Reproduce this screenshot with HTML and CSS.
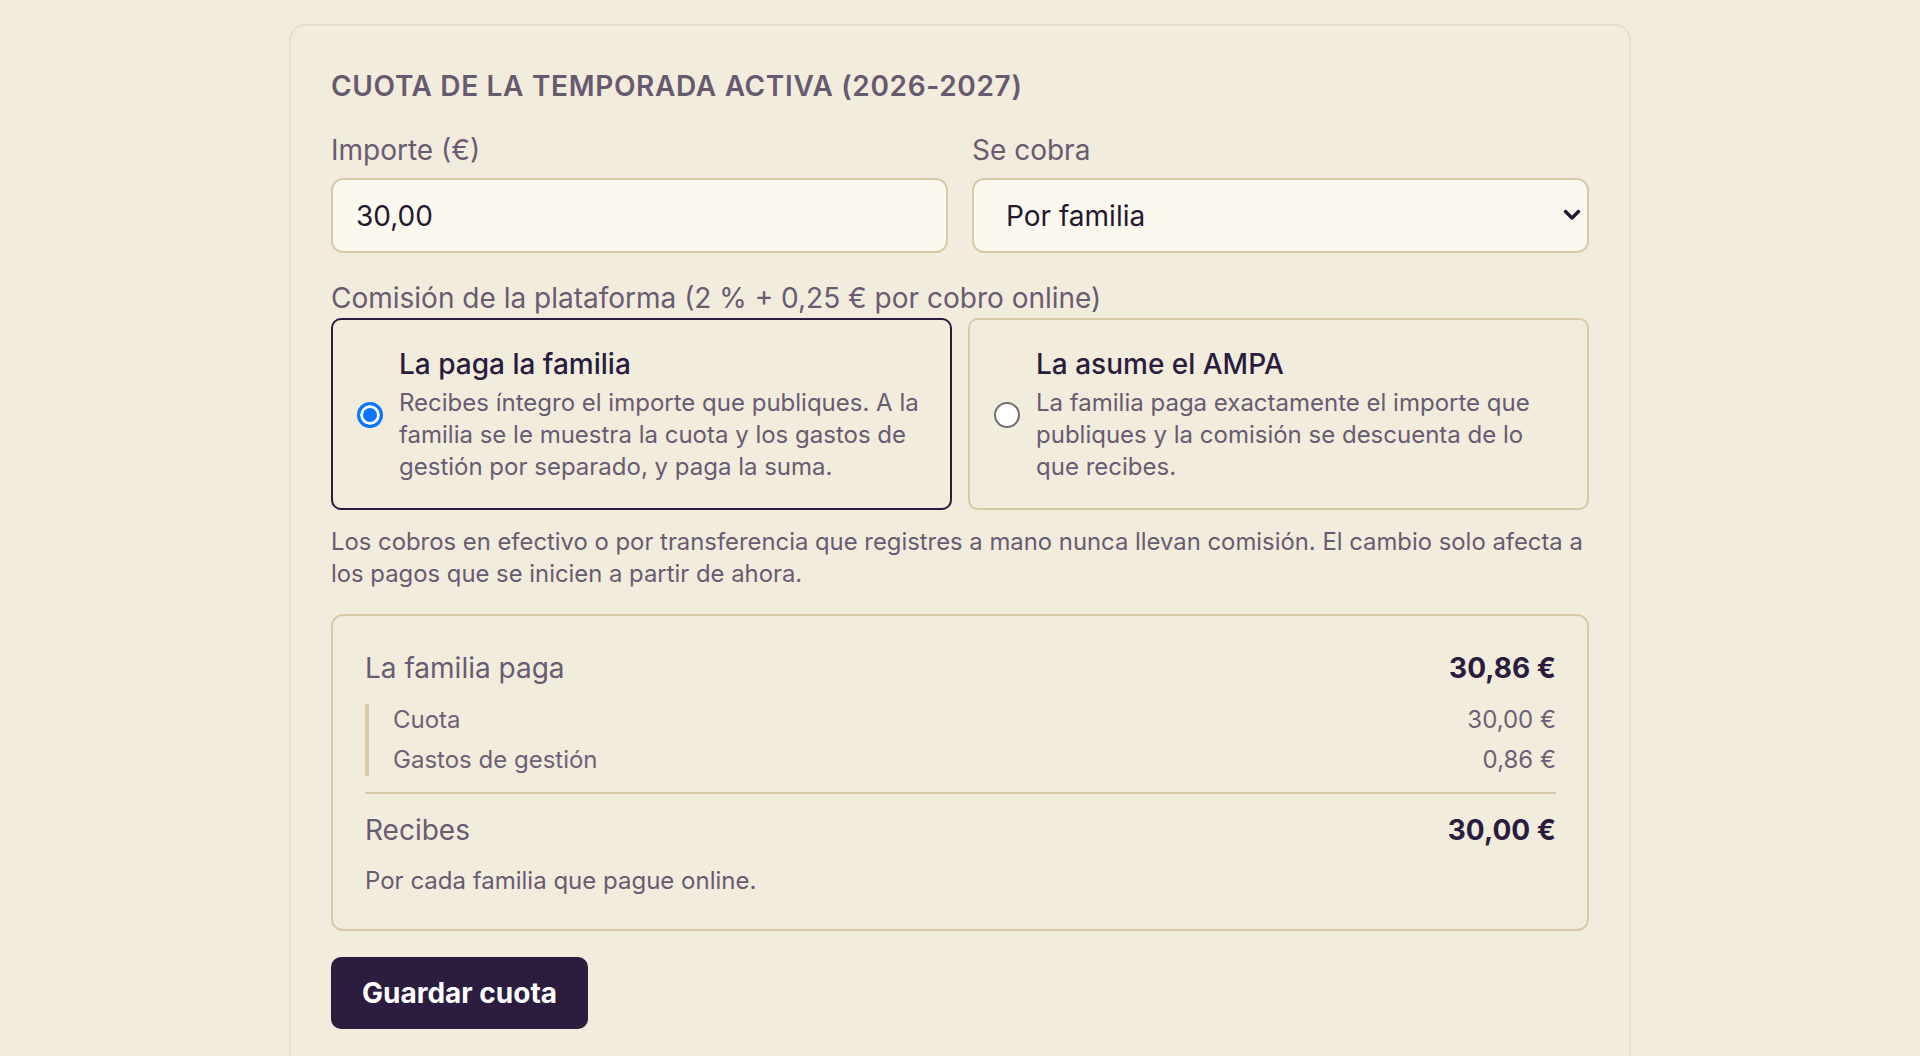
FILE: index.html
```html
<!DOCTYPE html>
<html lang="es">
<head>
<meta charset="utf-8">
<title>Cuota de la temporada activa</title>
<link rel="stylesheet" href="styles.css">
</head>
<body>
<main class="page">
  <section class="card">
    <h2 class="card-title">Cuota de la temporada activa (2026-2027)</h2>

    <div class="fields">
      <label class="field">
        <span class="field-label">Importe (€)</span>
        <input class="input" type="text" value="30,00">
      </label>
      <label class="field">
        <span class="field-label">Se cobra</span>
        <span class="select-wrap">
          <select class="select">
            <option selected>Por familia</option>
            <option>Por alumno</option>
          </select>
          <svg class="chevron" width="18" height="12" viewBox="0 0 18 12" aria-hidden="true">
            <path d="M2.5 2.5 L9 9 L15.5 2.5" fill="none" stroke="#24182f" stroke-width="3.4" stroke-linecap="round" stroke-linejoin="round"/>
          </svg>
        </span>
      </label>
    </div>

    <div class="commission">
      <div class="field-label commission-label">Comisión de la plataforma (2 % + 0,25 € por cobro online)</div>
      <div class="options">
        <label class="option option-selected">
          <input class="radio" type="radio" name="fee" checked>
          <span class="option-text">
            <span class="option-title">La paga la familia</span>
            <span class="option-desc">Recibes íntegro el importe que publiques. A la familia se le muestra la cuota y los gastos de gestión por separado, y paga la suma.</span>
          </span>
        </label>
        <label class="option">
          <input class="radio" type="radio" name="fee">
          <span class="option-text">
            <span class="option-title">La asume el AMPA</span>
            <span class="option-desc">La familia paga exactamente el importe que publiques y la comisión se descuenta de lo que recibes.</span>
          </span>
        </label>
      </div>
    </div>

    <p class="note">Los cobros en efectivo o por transferencia que registres a mano nunca llevan comisión. El cambio solo afecta a los pagos que se inicien a partir de ahora.</p>

    <div class="summary">
      <div class="sum-row">
        <span class="sum-label">La familia paga</span>
        <span class="sum-value">30,86 €</span>
      </div>
      <div class="breakdown">
        <div class="sub-row"><span>Cuota</span><span>30,00 €</span></div>
        <div class="sub-row"><span>Gastos de gestión</span><span>0,86 €</span></div>
      </div>
      <div class="sum-row sum-total">
        <span class="sum-label">Recibes</span>
        <span class="sum-value">30,00 €</span>
      </div>
      <p class="hint">Por cada familia que pague online.</p>
    </div>

    <button class="btn" type="button">Guardar cuota</button>
  </section>
</main>
</body>
</html>
```

FILE: styles.css
```css
* {
  box-sizing: border-box;
}

html,
body {
  margin: 0;
}

body {
  background: #f2ecdd;
  font-family: Inter, "Noto Sans", "Liberation Sans", sans-serif;
  color: #2a1c3e;
  overflow: hidden;
}

.page {
  padding-top: 24px;
}

.card {
  width: 1342px;
  margin: 0 auto;
  border: 2px solid #e6ddca;
  border-radius: 16px;
  padding: 41px 40px 40px;
  background: #f2ecdd;
}

.card-title {
  margin: 0 0 27px;
  font-size: 28px;
  line-height: 38px;
  font-weight: 600;
  letter-spacing: 0.024em;
  text-transform: uppercase;
  color: #675a70;
}

.fields {
  display: grid;
  grid-template-columns: 1fr 1fr;
  gap: 24px;
}

.field {
  display: flex;
  flex-direction: column;
}

.field-label {
  display: block;
  font-size: 28px;
  line-height: 36px;
  color: #685b72;
  margin-bottom: 10px;
}

.input,
.select {
  width: 100%;
  height: 75px;
  border: 2px solid #d8c9a7;
  border-radius: 12px;
  background: #fbf8f0;
  font-family: inherit;
  font-size: 28px;
  color: #24182f;
  outline: none;
}

.input {
  padding: 0 23px;
}

.select-wrap {
  position: relative;
  display: block;
}

.select {
  appearance: none;
  -webkit-appearance: none;
  padding: 0 48px 0 32px;
}

.chevron {
  position: absolute;
  right: 8px;
  top: 31px;
  pointer-events: none;
}

.commission {
  margin-top: 27px;
}

.commission-label {
  margin-bottom: 2px;
}

.options {
  display: grid;
  grid-template-columns: 1fr 1fr;
  gap: 16px;
}

.option {
  display: flex;
  align-items: center;
  gap: 16px;
  border: 2px solid #d8c9a7;
  border-radius: 10px;
  padding: 26px 24px 25px;
}

.option-selected {
  border-color: #2a1c3e;
}

.radio {
  appearance: none;
  -webkit-appearance: none;
  flex: none;
  margin: 0;
  width: 26px;
  height: 26px;
  border-radius: 50%;
  border: 2px solid #707070;
  background: #ffffff;
}

.radio:checked {
  border: 3px solid #0b75ff;
  background: #0b75ff;
  box-shadow: inset 0 0 0 3px #ffffff;
}

.option-text {
  display: flex;
  flex-direction: column;
}

.option-title {
  font-size: 28px;
  line-height: 36px;
  font-weight: 500;
  color: #2a1c3e;
  margin-bottom: 5px;
}

.option-desc {
  font-size: 24px;
  line-height: 32px;
  color: #685b72;
}

.note {
  margin: 16px 0 0;
  font-size: 23.85px;
  line-height: 32px;
  color: #685b72;
}

.summary {
  margin-top: 24px;
  border: 2px solid #d8c9a7;
  border-radius: 12px;
  padding: 33px 31px 32px 32px;
}

.sum-row {
  display: flex;
  justify-content: space-between;
  align-items: baseline;
  font-size: 28px;
  line-height: 38px;
}

.sum-label {
  color: #685b72;
}

.sum-value {
  font-weight: 700;
  color: #2a1c3e;
}

.breakdown {
  margin-top: 17px;
  border-left: 4px solid #d8c9a7;
  padding-left: 24px;
  display: grid;
  gap: 8px;
}

.sub-row {
  display: flex;
  justify-content: space-between;
  font-size: 24px;
  line-height: 32px;
  color: #6e6176;
}

.sum-total {
  margin-top: 16px;
  border-top: 2px solid #d8c9a7;
  padding-top: 17px;
}

.hint {
  margin: 16px 0 0;
  font-size: 24px;
  line-height: 32px;
  color: #685b72;
}

.btn {
  margin-top: 26px;
  border: none;
  border-radius: 10px;
  background: #2c1c3f;
  color: #ffffff;
  font-family: inherit;
  font-size: 28px;
  line-height: 36px;
  font-weight: 700;
  padding: 18px 31px;
}
```
